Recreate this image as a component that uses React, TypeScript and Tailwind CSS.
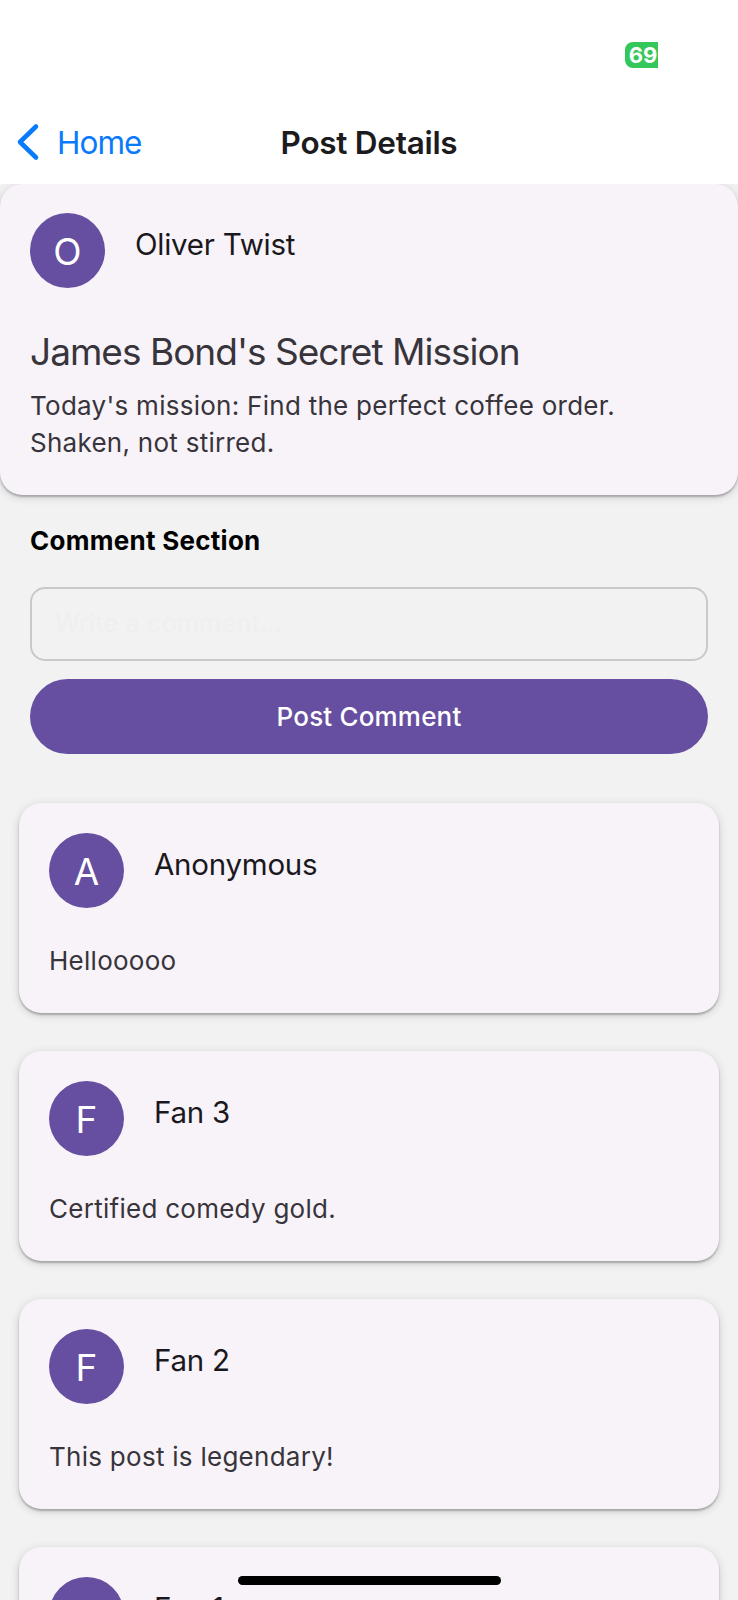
type Comment = { id: number; author: string; body: string };

const comments: Comment[] = [
  { id: 4, author: "Anonymous", body: "Hellooooo" },
  { id: 3, author: "Fan 3", body: "Certified comedy gold." },
  { id: 2, author: "Fan 2", body: "This post is legendary!" },
  { id: 1, author: "Fan 1", body: "" },
];

const cardClass =
  "rounded-[22.5px] bg-[#f7f3f9] px-[30px] shadow-[0_2px_2px_rgba(0,0,0,0.24),0_2px_10px_rgba(0,0,0,0.16)]";

const bodyClass = "text-[26px] leading-[37.5px] tracking-[0.27px] text-[#38343b]";

function StatusBar() {
  return (
    <div className="flex h-[100px] items-start justify-end pr-20 pt-[42px]">
      <div className="flex h-[26px] w-[33px] items-center justify-end overflow-hidden rounded-l-[8px] bg-[#34c759] pr-px text-[22px] font-bold leading-[26px] tracking-[-0.2px] text-white">
        69
      </div>
    </div>
  );
}

function NavBar() {
  return (
    <div className="grid h-[83.5px] grid-cols-[1fr_auto_1fr] items-center">
      <button className="flex items-center text-[31.5px] leading-[40px] tracking-[-0.95px] text-[#087afb]">
        <svg className="ml-4 h-10 w-6" viewBox="0 0 24 40" fill="none">
          <path
            d="M20 4.5L4 20L20 35.5"
            stroke="currentColor"
            strokeWidth="4.6"
            strokeLinecap="round"
            strokeLinejoin="round"
          />
        </svg>
        <span className="ml-[17px] mt-[3px]">Home</span>
      </button>
      <h1 className="mt-[2px] text-[31.5px] font-semibold leading-[40px] tracking-[-0.28px] text-[#1c1c1e]">
        Post Details
      </h1>
      <span />
    </div>
  );
}

function Author({ name }: { name: string }) {
  return (
    <div className="flex h-[75px] items-start">
      <div className="flex size-[75px] shrink-0 items-center justify-center rounded-full bg-[#664fa1] pt-[2px] text-[37px] leading-[73px] text-white">
        {name[0]}
      </div>
      <p className="ml-[30px] mt-[10.5px] text-[29.5px] leading-[40px] tracking-[-0.25px] text-[#1a181d]">
        {name}
      </p>
    </div>
  );
}

function CommentCard({ author, body }: Comment) {
  return (
    <li className={`${cardClass} h-[210px] shrink-0 pt-[30px]`}>
      <Author name={author} />
      {body && <p className={`${bodyClass} mt-[34px]`}>{body}</p>}
    </li>
  );
}

export default function App() {
  return (
    <div className="relative flex h-[1600px] w-[738px] flex-col overflow-hidden bg-[#f2f2f2] font-['Inter',sans-serif]">
      <header className="relative z-10 shrink-0 bg-white">
        <StatusBar />
        <NavBar />
      </header>

      <main className="flex flex-col">
        <article className={`${cardClass} h-[311.5px] shrink-0 pt-[29.5px]`}>
          <Author name="Oliver Twist" />
          <h2 className="mt-[40.5px] text-[37px] leading-[46px] tracking-[-0.98px] text-[#38343b]">
            James Bond's Secret Mission
          </h2>
          <p className={`${bodyClass} mt-3`}>
            Today's mission: Find the perfect coffee order.
            <br />
            Shaken, not stirred.
          </p>
        </article>

        <section className="flex flex-col px-[30px] pt-[26px]">
          <h3 className="text-[26px] font-bold leading-[40px] tracking-[0.27px] text-black">
            Comment Section
          </h3>
          <input
            placeholder="Write a comment..."
            className="mt-[26px] h-[73.5px] rounded-[15px] border-2 border-[#c9c9c9] bg-transparent px-[23px] pb-[3px] text-[25.5px] placeholder:text-[#efeff0]"
          />
          <button className="mt-[18.5px] h-[75px] rounded-full bg-[#664fa1] text-[26px] font-medium leading-[75px] tracking-[0.18px] text-white">
            Post Comment
          </button>
        </section>

        <ul className="flex flex-col gap-[38px] px-[19px] pt-[49px]">
          {comments.map((c) => (
            <CommentCard key={c.id} {...c} />
          ))}
        </ul>
      </main>

      <div className="absolute left-[238px] top-[1575.5px] h-[9.5px] w-[263px] rounded-full bg-black" />
    </div>
  );
}
